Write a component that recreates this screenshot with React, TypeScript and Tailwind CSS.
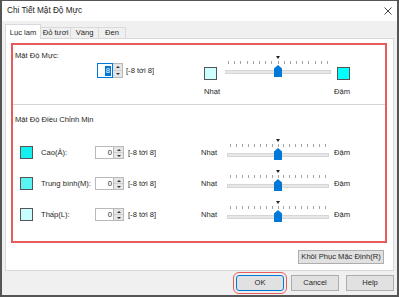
const font = "font-['Liberation_Sans',Arial,sans-serif]";

function Slider({ width }: { width: string }) {
  return (
    <div className={`relative h-[24px] shrink-0 ${width}`}>
      <div className="absolute left-1/2 top-[1px] -translate-x-1/2 w-0 h-0 border-x-[2px] border-x-transparent border-t-[3px] border-t-[#222]" />
      <div className="absolute left-[3px] right-[3px] top-[6px] flex justify-between">
        {Array.from({ length: 17 }).map((_, i) => (
          <div key={i} className="w-px h-[3px] bg-[#a5a5a5]" />
        ))}
      </div>
      <div className="absolute left-0 right-0 top-[15px] h-[4px] bg-[#e7e7e7] border border-[#d6d6d6]" />
      <svg className="absolute left-1/2 -translate-x-1/2 top-[10px]" width="8" height="12" viewBox="0 0 8 12">
        <path d="M4 0 L8 3.5 V12 H0 V3.5 Z" fill="#0078d7" />
      </svg>
    </div>
  );
}

function SpinBox({ value, focused }: { value: string; focused?: boolean }) {
  return (
    <div className={`flex shrink-0 ${focused ? "h-[15px]" : "h-[13px]"}`}>
      <div
        className={`${focused ? "w-[16px] border-[#0078d7]" : "w-[19px] border-[#b9b9b9]"} border bg-white flex items-center justify-end pr-[1px]`}
      >
        {focused ? (
          <span className="bg-[#0078d7] text-white leading-[10px] px-px">{value}</span>
        ) : (
          <span className="leading-[10px]">{value}</span>
        )}
      </div>
      <div className="w-[10px] flex flex-col border border-l-0 border-[#b9b9b9]">
        <div className="flex-1 bg-[#e5e5e5] flex items-center justify-center border-b border-[#cfcfcf]">
          <div className="w-0 h-0 border-x-[2px] border-x-transparent border-b-[2px] border-b-[#333]" />
        </div>
        <div className="flex-1 bg-[#e5e5e5] flex items-center justify-center">
          <div className="w-0 h-0 border-x-[2px] border-x-transparent border-t-[2px] border-t-[#333]" />
        </div>
      </div>
    </div>
  );
}

const rows = [
  { label: "Cao(Â):", swatch: "bg-[#14f0f0]" },
  { label: "Trung bình(M):", swatch: "bg-[#5cf3f3]" },
  { label: "Thấp(L):", swatch: "bg-[#c8fdfd]" },
];

export default function App() {
  return (
    <div className={`${font} text-[7.6px] text-[#262626] w-[399px] h-[297px] flex flex-col border-t border-l-2 border-r-2 border-b-2 border-[#555] bg-[#f0f0f0] overflow-hidden`}>
      {/* title bar */}
      <div className="h-[20px] bg-white flex items-center justify-between pl-[5px] pr-[5px] shrink-0">
        <span className="text-[8.2px] text-[#1a1a1a]">Chi Tiết Mật Độ Mực</span>
        <svg width="8" height="8" viewBox="0 0 8 8">
          <path d="M0.5 0.5 L7.5 7.5 M7.5 0.5 L0.5 7.5" stroke="#333" strokeWidth="0.9" />
        </svg>
      </div>

      <div className="flex flex-col pt-[3px] px-[3px] pb-[4px]">
        {/* tabs */}
        <div className="flex items-end h-[15px] -mb-px relative z-10">
          <div className="w-[36px] h-[15px] bg-white border border-b-0 border-[#d9d9d9] flex items-center justify-center pt-[2px]">
            Lục lam
          </div>
          <div className="w-[30px] h-[12px] border border-l-0 border-[#d9d9d9] flex items-center justify-center">Đỏ tươi</div>
          <div className="w-[28px] h-[12px] border border-l-0 border-[#d9d9d9] flex items-center justify-center">Vàng</div>
          <div className="w-[27px] h-[12px] border border-l-0 border-[#d9d9d9] flex items-center justify-center">Đen</div>
        </div>

        {/* panel */}
        <div className="bg-white border border-[#d9d9d9] flex flex-col pt-[4px] pb-[6px]">
          <div className="ml-[5px] w-[376px] h-[200px] border-2 border-[#e95b5b] flex flex-col">
            {/* section 1 */}
            <div className="h-[59px] flex shrink-0">
              <div className="w-[191px] flex flex-col pl-[2px]">
                <span className="mt-[6px] leading-[10px]">Mật Độ Mực:</span>
                <div className="mt-[2px] pl-[82px] flex items-center gap-[3px]">
                  <SpinBox value="8" focused />
                  <span>[-8 tới 8]</span>
                </div>
              </div>
              <div className="flex flex-col">
                <div className="flex items-start">
                  <div className="mt-[22px] w-[13px] h-[13px] border border-[#555] bg-[#ccffff]" />
                  <div className="mt-[10px] ml-[8px]">
                    <Slider width="w-[106px]" />
                  </div>
                  <div className="mt-[22px] ml-[6px] w-[13px] h-[13px] border border-[#555] bg-[#00ffff]" />
                </div>
                <div className="mt-[7px] flex justify-between leading-[10px]">
                  <span>Nhạt</span>
                  <span>Đậm</span>
                </div>
              </div>
            </div>
            <div className="h-px bg-[#d5d5d5] shrink-0" />

            {/* section 2 */}
            <span className="mt-[10px] pl-[2px] leading-[10px]">Mật Độ Điều Chỉnh Mịn</span>
            <div className="mt-[12px] flex flex-col">
              {rows.map((r) => (
                <div key={r.label} className="h-[31px] flex items-center">
                  <div className="w-[188px] flex items-center shrink-0">
                    <div className={`ml-[7px] w-[13px] h-[13px] border border-[#555] ${r.swatch}`} />
                    <span className="ml-[8px] w-[54px]">{r.label}</span>
                    <SpinBox value="0" />
                    <span className="ml-[4px]">[-8 tới 8]</span>
                  </div>
                  <span className="w-[26px]">Nhạt</span>
                  <div className="self-start mt-[1px]">
                    <Slider width="w-[102px]" />
                  </div>
                  <span className="ml-[5px]">Đậm</span>
                </div>
              ))}
            </div>
          </div>

          <div className="self-end mr-[9px] mt-[7px] w-[86px] h-[14px] bg-[#e1e1e1] border border-[#adadad] flex items-center justify-center">
            Khôi Phục Mặc Định(R)
          </div>
        </div>

        {/* dialog buttons */}
        <div className="mt-[4px] flex justify-end gap-[7px]">
          <div className="rounded-[3px] outline-[1.5px] outline outline-[#e95b5b] outline-offset-[2px] w-[48px] h-[16px] bg-[#e1e1e1] border border-[#0078d7] flex items-center justify-center">
            OK
          </div>
          <div className="w-[48px] h-[16px] bg-[#e1e1e1] border border-[#adadad] flex items-center justify-center">Cancel</div>
          <div className="w-[48px] h-[16px] bg-[#e1e1e1] border border-[#adadad] flex items-center justify-center">Help</div>
        </div>
      </div>
    </div>
  );
}
